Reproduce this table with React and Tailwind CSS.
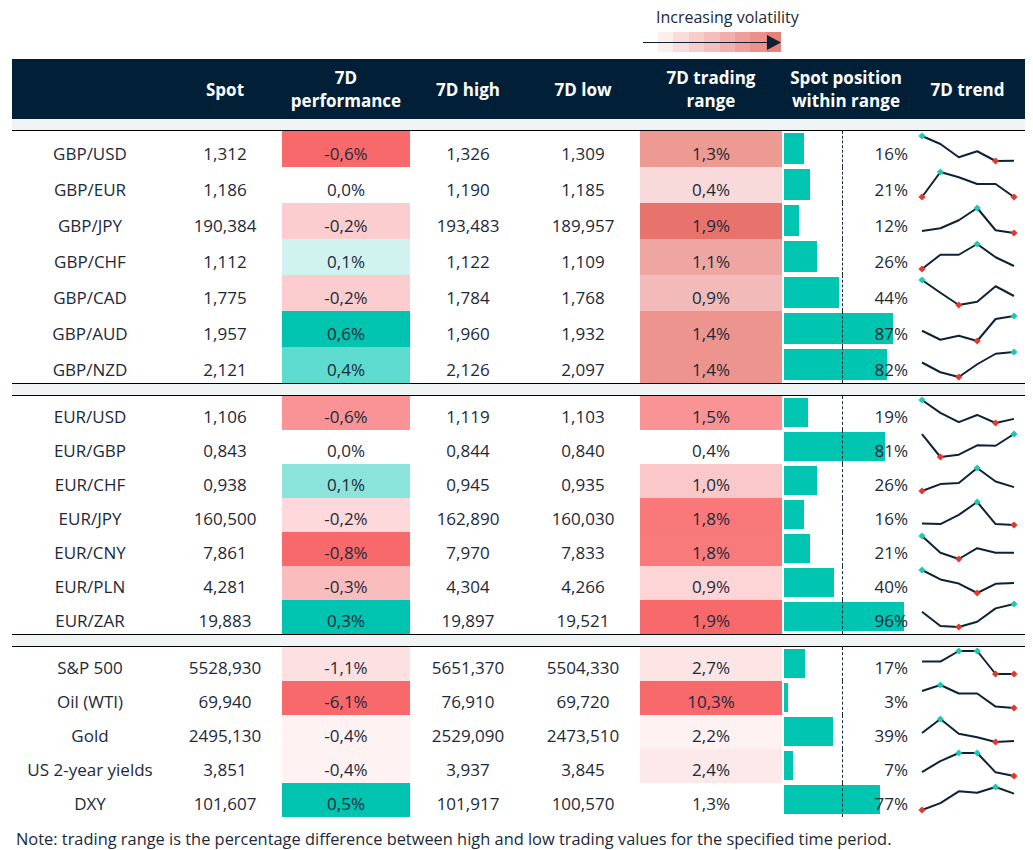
const FONT = { fontFamily: '"Open Sans", "Noto Sans", sans-serif' }

const GBP = [
  ['GBP/USD', '1,312', '-0,6%', '#f8696b', '1,326', '1,309', '1,3%', '#ec9a92', 16, [0, .32, .85, .61, 1, .99]],
  ['GBP/EUR', '1,186', '0,0%', '#ffffff', '1,190', '1,185', '0,4%', '#f8dadb', 21, [1, 0, .21, .48, .48, 1]],
  ['GBP/JPY', '190,384', '-0,2%', '#fbcdcf', '193,483', '189,957', '1,9%', '#e8736c', 12, [.92, .81, .49, 0, .89, 1]],
  ['GBP/CHF', '1,112', '0,1%', '#d0f3f0', '1,122', '1,109', '1,1%', '#efa5a2', 26, [1, .43, .43, 0, .53, .88]],
  ['GBP/CAD', '1,775', '-0,2%', '#fbcdcf', '1,784', '1,768', '0,9%', '#f2bbb9', 44, [0, .51, 1, .87, .25, .64]],
  ['GBP/AUD', '1,957', '0,6%', '#00c4b0', '1,960', '1,932', '1,4%', '#ec948d', 87, [.59, .95, .79, 1, .12, 0]],
  ['GBP/NZD', '2,121', '0,4%', '#5ddbcf', '2,126', '2,097', '1,4%', '#ec948d', 82, [.42, .81, 1, .49, .07, 0]],
]

const EUR = [
  ['EUR/USD', '1,106', '-0,6%', '#f99395', '1,119', '1,103', '1,5%', '#f99395', 19, [0, .56, .96, .65, 1, .82]],
  ['EUR/GBP', '0,843', '0,0%', '#ffffff', '0,844', '0,840', '0,4%', '#ffffff', 81, [.01, 1, .9, .49, .51, 0]],
  ['EUR/CHF', '0,938', '0,1%', '#8be4dc', '0,945', '0,935', '1,0%', '#fbc8ca', 26, [1, .7, .65, 0, .59, .83]],
  ['EUR/JPY', '160,500', '-0,2%', '#fdd9db', '162,890', '160,030', '1,8%', '#f97879', 16, [.93, .96, .56, 0, .96, 1]],
  ['EUR/CNY', '7,861', '-0,8%', '#f8696b', '7,970', '7,833', '1,8%', '#f97a7b', 21, [0, .73, 1, .53, .73, .73]],
  ['EUR/PLN', '4,281', '-0,3%', '#fbbcbd', '4,304', '4,266', '0,9%', '#fdd5d7', 40, [0, .41, .59, 1, .6, .56]],
  ['EUR/ZAR', '19,883', '0,3%', '#00c4b0', '19,897', '19,521', '1,9%', '#f8696b', 96, [.34, .96, 1, .77, .19, 0]],
]

const OTHER = [
  ['S&P 500', '5528,930', '-1,1%', '#fde1e2', '5651,370', '5504,330', '2,7%', '#fde4e5', 17, [.46, .46, 0, 0, 1, 1]],
  ['Oil (WTI)', '69,940', '-6,1%', '#f8696b', '76,910', '69,720', '10,3%', '#f8696b', 3, [.26, 0, .37, .37, .94, 1]],
  ['Gold', '2495,130', '-0,4%', '#fef2f2', '2529,090', '2473,510', '2,2%', '#fef1f1', 39, [.61, 0, .64, .79, 1, .96]],
  ['US 2-year yields', '3,851', '-0,4%', '#fef2f2', '3,937', '3,845', '2,4%', '#fde9ea', 7, [.83, .35, 0, 0, .84, 1]],
  ['DXY', '101,607', '0,5%', '#00c4b0', '101,917', '100,570', '1,3%', '#ffffff', 77, [1, .7, .19, .25, 0, .29]],
]

const COLS = 'grid grid-cols-[156px_114px_128px_116px_114px_142px_128px_115px]'
const LEGEND = ['#fdeeee', '#fbdcdc', '#f8cccb', '#f5bdbb', '#f2aeab', '#ef9f9b', '#ec908b', '#e9817b']

function Diamond({ x, y, color }) {
  const r = 3.6
  return <polygon points={`${x},${y - r} ${x + r},${y} ${x},${y + r} ${x - r},${y}`} fill={color} />
}

function Spark({ vals, h }) {
  const top = h === 36 ? 5 : 4
  const span = h === 36 ? 25 : 23
  const pts = vals.map((v, i) => [12 + i * 18.4, top + v * span])
  return (
    <svg width="115" height={h} className="block">
      <polyline points={pts.map(p => p.join(',')).join(' ')} fill="none" stroke="#0e2236" strokeWidth="2" strokeLinejoin="round" />
      {pts.map((p, i) => vals[i] === 0 ? <Diamond key={i} x={p[0]} y={p[1]} color="#1fc8b4" />
        : vals[i] === 1 ? <Diamond key={i} x={p[0]} y={p[1]} color="#e03a2e" /> : null)}
    </svg>
  )
}

function Row({ r, h }) {
  const [name, spot, perf, perfBg, high, low, range, rangeBg, pos, spark] = r
  const txt = 'flex items-end justify-center leading-[22px] pb-[2px]'
  return (
    <div className={`${COLS} ${h === 36 ? 'h-[36px]' : 'h-[34px]'}`}>
      <div className={txt}>{name}</div>
      <div className={txt}>{spot}</div>
      <div className={txt} style={{ backgroundColor: perfBg }}>{perf}</div>
      <div className={txt}>{high}</div>
      <div className={txt}>{low}</div>
      <div className={txt} style={{ backgroundColor: rangeBg }}>{range}</div>
      <div className={`relative ${txt} justify-end pr-[2px]`}>
        <div className="absolute left-[2px] top-[2px] bottom-[3px] bg-[#00c5b1]" style={{ width: pos * 1.25 }} />
        <div className="absolute left-[60px] top-0 bottom-0 border-l border-dashed border-[#1c2939]" />
        <span className="relative">{pos}%</span>
      </div>
      <div><Spark vals={spark} h={h} /></div>
    </div>
  )
}

function Divider() {
  return (
    <div className="border-y border-black h-[13px] bg-[#f1f4f5]" />
  )
}

export default function App() {
  return (
    <div className="w-[1033px] h-[850px] bg-white text-[#1c2939] text-[17px] overflow-hidden" style={FONT}>
      <div className="h-[59px] pl-[643px] pt-[7px]">
        <div className="pl-[13px] text-[16px] leading-[21px]">Increasing volatility</div>
        <div className="relative mt-[4px] w-[138px] h-[20px] flex">
          <div className="ml-[15px] flex">
            {LEGEND.map(c => <div key={c} className="w-[15.4px] h-[20px]" style={{ backgroundColor: c }} />)}
          </div>
          <div className="absolute left-0 top-[9.5px] w-[126px] h-[1.5px] bg-[#0e2236]" />
          <svg className="absolute left-[124px] top-[3px]" width="15" height="15">
            <polygon points="0,0 14,7.5 0,15" fill="#0e2236" />
          </svg>
        </div>
      </div>
      <div className="ml-[12px] w-[1013px]">
        <div className={`${COLS} h-[60px] bg-[#021f38] text-white font-bold leading-[23px]`}>
          <div />
          <div className="flex items-center justify-center text-center">Spot</div>
          <div className="flex items-center justify-center text-center">7D<br />performance</div>
          <div className="flex items-center justify-center text-center">7D high</div>
          <div className="flex items-center justify-center text-center">7D low</div>
          <div className="flex items-center justify-center text-center">7D trading<br />range</div>
          <div className="flex items-center justify-center text-center">Spot position<br />within range</div>
          <div className="flex items-center justify-center text-center">7D trend</div>
        </div>
        <div className="h-[12px] bg-[#f1f4f5] border-b border-black" />
        {GBP.map(r => <Row key={r[0]} r={r} h={36} />)}
        <Divider />
        {EUR.map(r => <Row key={r[0]} r={r} h={34} />)}
        <Divider />
        {OTHER.map(r => <Row key={r[0]} r={r} h={34} />)}
      </div>
      <div className="pl-[16px] mt-[11px] text-[16.4px] leading-[21px]">
        Note: trading range is the percentage difference between high and low trading values for the specified time period.
      </div>
    </div>
  )
}
